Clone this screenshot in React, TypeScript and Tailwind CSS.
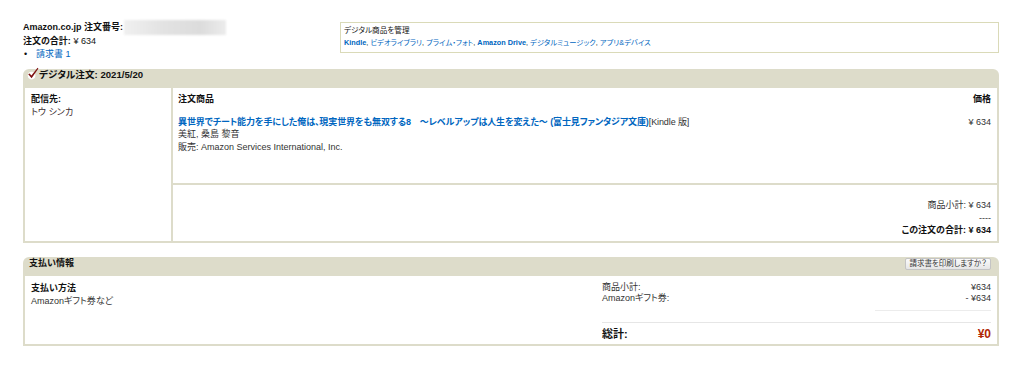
const Check = () => (
  <svg width="12" height="13" viewBox="0 0 12 13" className="-mt-[2px] shrink-0">
    <circle cx="4.6" cy="8.6" r="3.8" fill="#ffffff" />
    <path d="M1.2 7.2 L2.6 6.4 L4.4 8.6 L10.6 0.8 L11.4 1.4 L4.6 11.2 Z" fill="#7e1212" />
  </svg>
);

const Header = ({ children }: { children: React.ReactNode }) => (
  <div className="flex h-[19px] items-start justify-between rounded-t-[6px] bg-[#dddcca] leading-[11px] font-bold text-[#111]">
    {children}
  </div>
);

export default function App() {
  return (
    <div className="min-h-[368px] w-[1024px] bg-white pl-[23px] pt-[20px] font-['Liberation_Sans','Noto_Sans_CJK_JP',sans-serif] text-[9px] leading-[12.5px] text-[#111] [font-feature-settings:'palt']">
      <div className="flex h-[38px] w-[976px]">
        <div className="w-[317px]">
          <div className="flex items-center font-bold">
            Amazon.co.jp 注文番号:
            <span className="ml-[1px] inline-block h-[15px] w-[102px] bg-[linear-gradient(90deg,#f0f0f0,#e2e2e2_40%,#dcdcdc_75%,#ececec)] blur-[1.2px]" />
          </div>
          <div>
            <span className="font-bold">注文の合計:</span> ¥ 634
          </div>
          <div className="flex">
            <span className="w-[13px] pl-[1px]">•</span>
            <a className="text-[#0066c0]">請求書 1</a>
          </div>
        </div>
        <div className="mt-[2px] h-[31px] w-[659px] border border-[#dadab8] px-[3px] pt-[2px] leading-[12px]">
          <div className="text-[7.6px]">デジタル商品を管理</div>
          <div className="text-[7.3px] text-[#0066c0]">
            <a className="font-bold">Kindle</a>
            <span className="text-[#111]">, </span>
            <a>ビデオライブラリ</a>
            <span className="text-[#111]">, </span>
            <a>プライム・フォト</a>
            <span className="text-[#111]">, </span>
            <a className="font-bold">Amazon Drive</a>
            <span className="text-[#111]">, </span>
            <a>デジタルミュージック</a>
            <span className="text-[#111]">, </span>
            <a>アプリ&amp;デバイス</a>
          </div>
        </div>
      </div>

      <div className="mt-[11px] w-[976px]">
        <Header>
          <div className="flex items-center pl-[4px] text-[9.6px]">
            <Check />
            <span>デジタル注文: 2021/5/20</span>
          </div>
        </Header>
        <div className="flex h-[155px] border-x-2 border-b-2 border-[#dddcca] bg-white">
          <div className="w-[148px] border-r-2 border-[#dddcca] pl-[6px] pt-[5px]">
            <div className="font-bold">配信先:</div>
            <div className="text-[#3a2c30]">トウ シンカ</div>
          </div>
          <div className="flex flex-1 flex-col">
            <div className="h-[97px] border-b-2 border-[#dddcca] pl-[5px] pr-[6px] pt-[5px]">
              <div className="flex justify-between font-bold">
                <span>注文商品</span>
                <span>価格</span>
              </div>
              <div className="mt-[10px] flex justify-between">
                <div>
                  <div className="tracking-[-0.1px]">
                    <a className="font-bold text-[#0066c0]">
                      異世界でチート能力を手にした俺は、現実世界をも無双する8　～レベルアップは人生を変えた～ (富士見ファンタジア文庫)
                    </a>
                    <span className="text-[#333]">[Kindle 版]</span>
                  </div>
                  <div className="text-[#333]">美紅, 桑島 黎音</div>
                  <div className="text-[#333]">販売: Amazon Services International, Inc.</div>
                </div>
                <span className="text-[#333]">¥ 634</span>
              </div>
            </div>
            <div className="flex flex-1 flex-col items-end pr-[6px] pt-[14px] text-[#333]">
              <div>商品小計: ¥ 634</div>
              <div>----</div>
              <div className="font-bold text-[#111]">この注文の合計: ¥ 634</div>
            </div>
          </div>
        </div>
      </div>

      <div className="mt-[14px] w-[976px]">
        <Header>
          <span className="pl-[6px] pt-[1px]">支払い情報</span>
          <button className="mr-[8px] mt-[1px] flex h-[12px] w-[86px] items-center justify-center rounded-[2px] border border-[#c4c4c4] bg-[linear-gradient(#fafafa,#e6e6e6)] text-[7.5px] leading-[10px] font-normal text-[#333]">
            請求書を印刷しますか？
          </button>
        </Header>
        <div className="flex h-[70px] border-x-2 border-b-2 border-[#dddcca] bg-white">
          <div className="flex-1 pl-[6px] pt-[6px]">
            <div className="font-bold">支払い方法</div>
            <div className="text-[#333]">Amazonギフト券など</div>
          </div>
          <div className="mr-[6px] w-[389px] pt-[6px] leading-[11px] text-[#333]">
            <div className="flex justify-between">
              <span>商品小計:</span>
              <span>¥634</span>
            </div>
            <div className="flex justify-between">
              <span>Amazonギフト券:</span>
              <span>- ¥634</span>
            </div>
            <div className="ml-auto mt-[6px] h-[1px] w-[116px] bg-[#ececec]" />
            <div className="mt-[11px] h-[1px] w-full bg-[#e6e6e6]" />
            <div className="mt-[4px] flex items-center justify-between leading-[14px]">
              <span className="text-[11px] font-bold text-[#111]">総計:</span>
              <span className="text-[12px] font-bold text-[#b12704]">¥0</span>
            </div>
          </div>
        </div>
      </div>
    </div>
  );
}
